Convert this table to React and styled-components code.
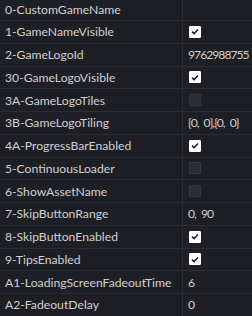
import React from "react";
import styled, { createGlobalStyle } from "styled-components";

const Global = createGlobalStyle`
  html, body { margin: 0; padding: 0; background: #1e1f24; }
  body { overflow: hidden; }
`;

const Grid = styled.div`
  width: 252px;
  height: 316px;
  overflow: hidden;
  background: #1e1f24;
  font-family: "Lato", "Liberation Sans", sans-serif;
  font-size: 12.2px;
  color: #cfcfd2;
`;

const Inner = styled.div`
  margin-top: -1.75px;
`;

const Row = styled.div`
  display: grid;
  grid-template-columns: 183px 1fr;
  height: 22.75px;
  box-sizing: border-box;
  border-bottom: 1px solid #2c2d33;
`;

const Label = styled.div`
  display: flex;
  align-items: center;
  padding-left: 5px;
  border-right: 1px solid #2c2d33;
  white-space: nowrap;
  overflow: hidden;
`;

const Value = styled.div`
  display: flex;
  align-items: center;
  padding-left: 5px;
  white-space: pre;
  overflow: hidden;
  letter-spacing: -1px;
  word-spacing: 3px;
`;

const Box = styled.span`
  width: 12px;
  height: 12px;
  margin-left: 1px;
  border-radius: 1px;
  box-sizing: border-box;
  display: flex;
  align-items: center;
  justify-content: center;
  background: ${(p) => (p.$on ? "#ffffff" : "#2b2c31")};
  border: 1px solid ${(p) => (p.$on ? "#ffffff" : "#34353b")};
`;

const Check = ({ on }) => (
  <Box $on={on}>
    {on && (
      <svg width="8" height="7" viewBox="0 0 8 7">
        <path d="M1 3.6 L3.1 5.6 L7 1.4" fill="none" stroke="#1e1f24" strokeWidth="1.5" />
      </svg>
    )}
  </Box>
);

const rows = [
  ["0-CustomGameName", ""],
  ["1-GameNameVisible", true],
  ["2-GameLogoId", "9762988755"],
  ["30-GameLogoVisible", true],
  ["3A-GameLogoTiles", false],
  ["3B-GameLogoTiling", "{0, 0},{0, 0}"],
  ["4A-ProgressBarEnabled", true],
  ["5-ContinuousLoader", false],
  ["6-ShowAssetName", false],
  ["7-SkipButtonRange", "0, 90"],
  ["8-SkipButtonEnabled", true],
  ["9-TipsEnabled", true],
  ["A1-LoadingScreenFadeoutTime", "6"],
  ["A2-FadeoutDelay", "0"],
];

export default function App() {
  return (
    <Grid>
      <Global />
      <Inner>
        {rows.map(([name, v]) => (
          <Row key={name}>
            <Label>{name}</Label>
            <Value>{typeof v === "boolean" ? <Check on={v} /> : v}</Value>
          </Row>
        ))}
      </Inner>
    </Grid>
  );
}
